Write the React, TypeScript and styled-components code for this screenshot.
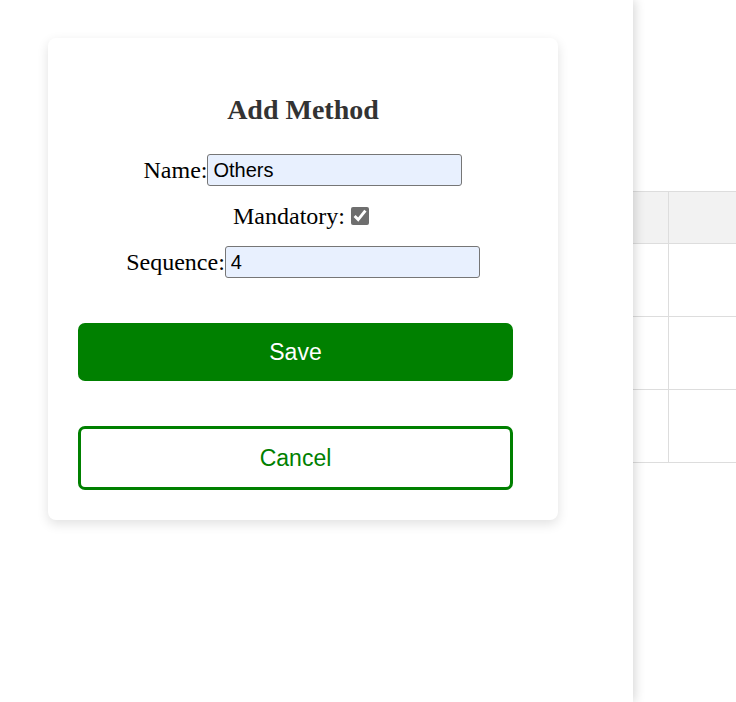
import React from 'react';
import styled, { createGlobalStyle } from 'styled-components';

const GlobalStyle = createGlobalStyle`
  html, body {
    margin: 0;
    padding: 0;
    background: #ffffff;
  }
  body {
    font-family: "Liberation Serif", "Times New Roman", serif;
  }
`;

const StyledPage = styled.div`
  display: flex;
  flex-direction: row;
  width: 736px;
  height: 702px;
  overflow: hidden;
`;

const StyledSidePanel = styled.div`
  position: relative;
  z-index: 1;
  flex: 0 0 633px;
  height: 100%;
  background: #ffffff;
  box-shadow: 2px 0 10px rgba(0, 0, 0, 0.16);
  padding: 38px 0 0 48px;
  box-sizing: border-box;
`;

const StyledCard = styled.div`
  width: 510px;
  box-sizing: border-box;
  padding: 30px;
  background: #ffffff;
  border-radius: 8px;
  box-shadow: 0 4px 12px rgba(0, 0, 0, 0.12);
  display: flex;
  flex-direction: column;
`;

const StyledTitle = styled.h2`
  margin: 26px 0 28px 0;
  text-align: center;
  color: #333333;
  font-size: 28px;
  font-weight: 700;
  line-height: 32px;
`;

const StyledForm = styled.div`
  display: flex;
  flex-direction: column;
  align-items: center;
  gap: 18px;
`;

const StyledRow = styled.label`
  display: flex;
  flex-direction: row;
  align-items: center;
  justify-content: center;
  font-size: 24px;
  color: #000000;
  line-height: 24px;
`;

const StyledInput = styled.input`
  width: 255px;
  height: 32px;
  box-sizing: border-box;
  margin: 0;
  padding: 1px 5px;
  border: 1px solid #767676;
  border-radius: 3px;
  background: #e8f0fe;
  font-family: "Liberation Sans", Arial, sans-serif;
  font-size: 20px;
  color: #000000;
  outline: none;
`;

const StyledCheckbox = styled.input`
  width: 18px;
  height: 18px;
  margin: 0 4px 0 6px;
  accent-color: #6e6e6e;
`;

const StyledButton = styled.button<{ variant: 'solid' | 'outline' }>`
  width: 435px;
  box-sizing: border-box;
  height: ${props => (props.variant === 'solid' ? '58px' : '64px')};
  margin-top: 45px;
  border-radius: 7px;
  border: ${props => (props.variant === 'solid' ? 'none' : '3px solid #008000')};
  background: ${props => (props.variant === 'solid' ? '#008000' : '#ffffff')};
  color: ${props => (props.variant === 'solid' ? '#ffffff' : '#008000')};
  font-family: "Liberation Sans", Arial, sans-serif;
  font-size: 23px;
  cursor: pointer;
`;

const StyledTableArea = styled.div`
  flex: 1;
  padding-top: 191px;
  overflow: hidden;
`;

const StyledTable = styled.table`
  width: 300px;
  border-collapse: collapse;
`;

const StyledHeadCell = styled.th<{ narrow?: boolean }>`
  width: ${props => (props.narrow ? '35px' : 'auto')};
  height: 51px;
  background: #f2f2f2;
  border: 1px solid #dddddd;
  border-left: none;
  padding: 0;
`;

const StyledCell = styled.td`
  height: 72px;
  border: 1px solid #dddddd;
  border-left: none;
  padding: 0;
`;

export default function App() {
  const rows = [1, 2, 3];
  return (
    <>
      <GlobalStyle />
      <StyledPage>
        <StyledSidePanel>
          <StyledCard>
            <StyledTitle>Add Method</StyledTitle>
            <StyledForm>
              <StyledRow>
                Name:<StyledInput type="text" defaultValue="Others" />
              </StyledRow>
              <StyledRow>
                Mandatory:<StyledCheckbox type="checkbox" defaultChecked />
              </StyledRow>
              <StyledRow>
                Sequence:<StyledInput type="text" defaultValue="4" />
              </StyledRow>
            </StyledForm>
            <StyledButton variant="solid">Save</StyledButton>
            <StyledButton variant="outline">Cancel</StyledButton>
          </StyledCard>
        </StyledSidePanel>
        <StyledTableArea>
          <StyledTable>
            <thead>
              <tr>
                <StyledHeadCell narrow />
                <StyledHeadCell />
              </tr>
            </thead>
            <tbody>
              {rows.map(r => (
                <tr key={r}>
                  <StyledCell />
                  <StyledCell />
                </tr>
              ))}
            </tbody>
          </StyledTable>
        </StyledTableArea>
      </StyledPage>
    </>
  );
}
